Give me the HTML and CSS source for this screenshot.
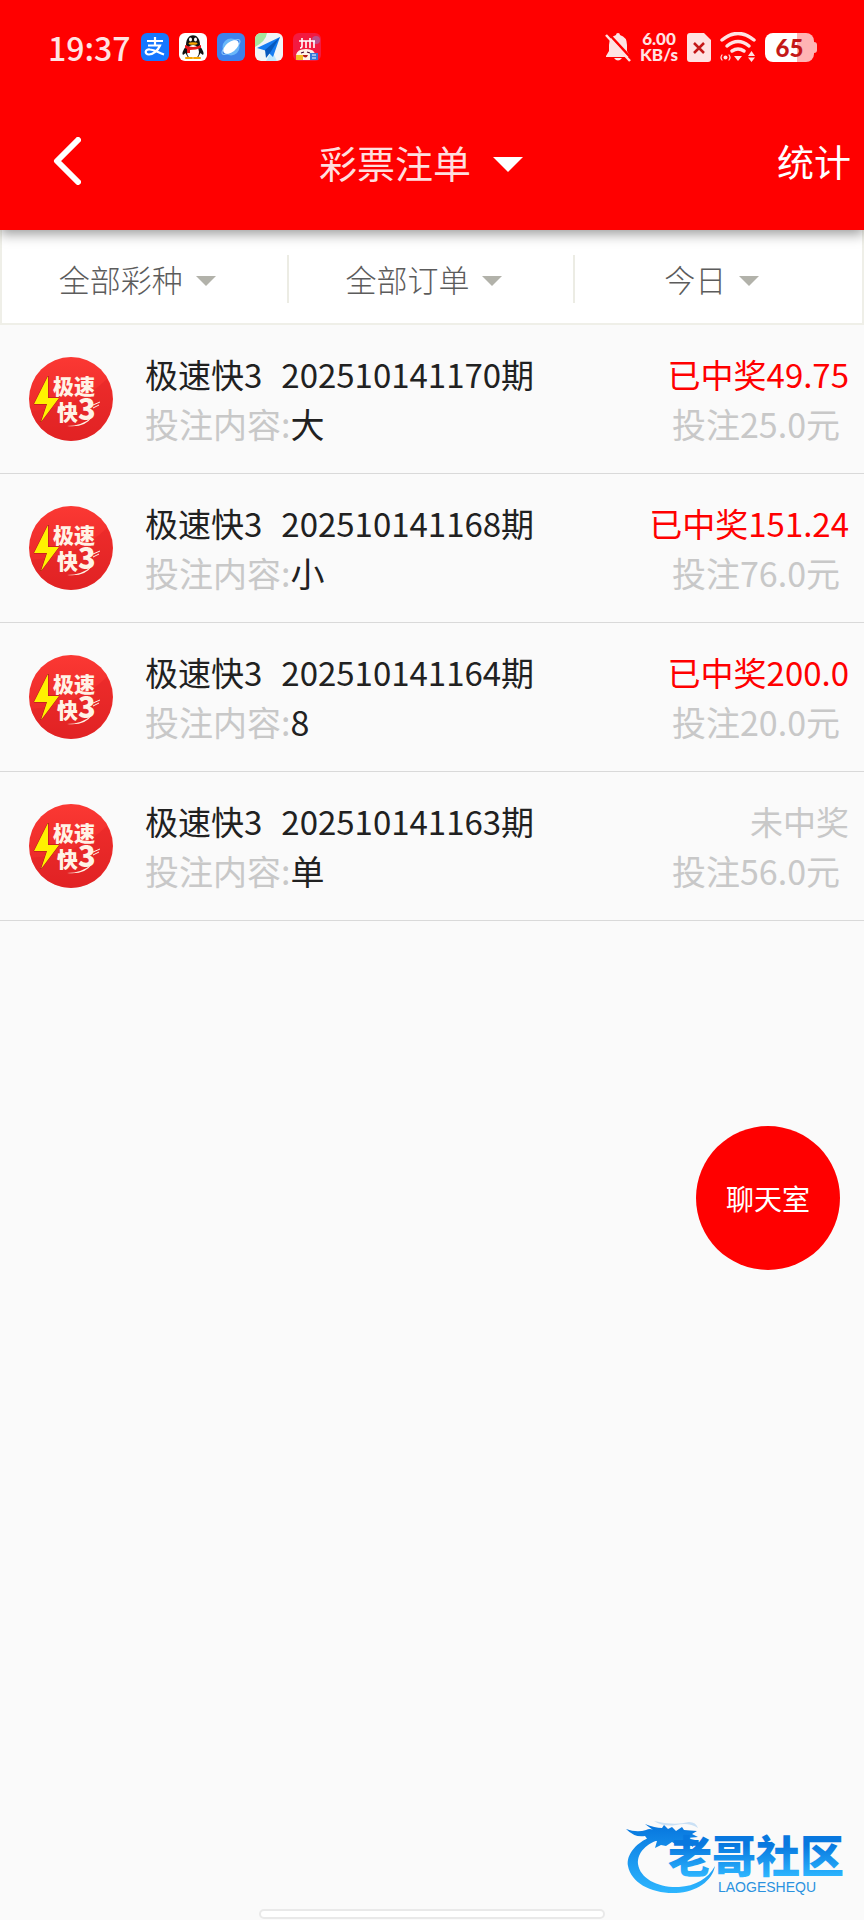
FILE: index.html
```html
<!DOCTYPE html>
<html lang="zh-CN">
<head>
  <meta charset="UTF-8">
  <meta name="viewport" content="width=device-width, initial-scale=1.0">
  <title>彩票注单</title>
  <link rel="stylesheet" href="styles.css">
</head>
<body>
  <header class="top">
    <!-- 状态栏 -->
    <div class="status-bar">
      <div class="status-left">
        <span class="clock">19:37</span>
        <svg class="app-icon" viewBox="0 0 28 28">
          <rect width="28" height="28" rx="6" fill="#1677ff"/>
          <path d="M6 8h16M14 4v8M7 12.500h12c-2 5-7 9-11 9-5 0-4-6 1-5 5 .5 8 3 14 5" fill="none" stroke="#fff" stroke-width="2.200"/>
        </svg>
        <svg class="app-icon" viewBox="0 0 28 28">
          <rect width="28" height="28" rx="6" fill="#fff"/>
          <path d="M7 13q-5 7-3 9l4-3zM21 13q5 7 3 9l-4-3z" fill="#111"/>
          <ellipse cx="14" cy="17" rx="8" ry="9" fill="#111"/>
          <ellipse cx="14" cy="19" rx="6" ry="7" fill="#fff"/>
          <path d="M7 12C7-1 21-1 21 12z" fill="#111"/>
          <ellipse cx="11.500" cy="6.500" rx="1.500" ry="2" fill="#fff"/>
          <ellipse cx="16.500" cy="6.500" rx="1.500" ry="2" fill="#fff"/>
          <ellipse cx="14" cy="10.500" rx="4.500" ry="1.300" fill="#f7a400"/>
          <path d="M6 12q8 4 16 0v3q-5 2-11 2v3H8v-4l-2-1z" fill="#e8161b"/>
          <path d="M7 25h6M15 25h6" stroke="#f7a400" stroke-width="2" stroke-linecap="round"/>
        </svg>
        <svg class="app-icon" viewBox="0 0 28 28">
          <rect width="28" height="28" rx="6" fill="#3d83ea"/>
          <circle cx="14" cy="14" r="8.500" fill="#68b7fa"/>
          <ellipse cx="14" cy="14" rx="11" ry="4" fill="none" stroke="#8bc9fb" transform="rotate(-38 14 14)"/>
          <ellipse cx="14" cy="14" rx="9" ry="5" fill="#fff" transform="rotate(-38 14 14)"/>
        </svg>
        <svg class="app-icon" viewBox="0 0 28 28">
          <rect width="28" height="28" rx="6" fill="#f1f5f7"/>
          <path d="M0 14V6a6 6 0 0 1 6-6h6q-1 8-12 14z" fill="#a5e79f"/>
          <path d="M11 28l6-10 5 10z" fill="#bde7ff"/>
          <path d="M2 15L25 4l-7 20-6-6z" fill="#167df2"/>
          <path d="M25 4L10 17l1 8 4-5z" fill="#0759bd"/>
        </svg>
        <svg class="app-icon" viewBox="0 0 28 28">
          <rect width="28" height="28" rx="6" fill="#f31a40"/>
          <circle cx="23" cy="7" r="4" fill="#bc508b"/>
          <path d="M6 8h16M9 5v8q0 2-2 2M13 8v7M17 5v10M21 8v7" fill="none" stroke="#fff" stroke-width="1.600"/>
          <path d="M3 22q1-6 10-6 9 0 9 6l-5 5H7z" fill="#fff2e6"/>
          <path d="M8 20l3-1M14 19l3 1" stroke="#402" stroke-width="1.200"/>
          <path d="M9 22q4 5 6 0z" fill="#b51b16"/>
          <rect x="3" y="22" width="7" height="5" fill="#f4bd25"/>
          <rect x="17" y="20" width="8" height="7" fill="#3479d8"/>
          <path d="M19 22h4M19 25h4" stroke="#fff"/>
        </svg>
      </div>
      <div class="status-right">
        <svg class="bell" viewBox="0 0 26 30">
          <path d="M13 1q2 0 2 2 7 2 7 10v6l3 5v1H1v-1l3-5v-6q0-8 7-10 0-2 2-2z" fill="#ffe3e3"/>
          <path d="M9 26h8q-4 5-8 0z" fill="#ffe3e3"/>
          <path d="M3 1l24 26" stroke="#f00" stroke-width="2.500"/>
          <path d="M1 3l24 26" stroke="#ffe3e3" stroke-width="2.500"/>
        </svg>
        <div class="speed"><span>6.00</span><span>KB/s</span></div>
        <svg class="sim" viewBox="0 0 24 29">
          <path d="M3 0h14l7 7v19q0 3-3 3H3q-3 0-3-3V3q0-3 3-3z" fill="#ffe3e3"/>
          <path d="M7 10l10 10M17 10L7 20" stroke="#c41818" stroke-width="2.500"/>
        </svg>
        <svg class="wifi" viewBox="0 0 36 30">
          <g fill="none" stroke="#ffe3e3" stroke-linecap="round">
            <path d="M2 8Q18-5 34 8" stroke-width="3.500"/>
            <path d="M7 14q11-9 22 0" stroke-width="3.500"/>
            <path d="M12 19q6-4 12 0" stroke-width="3.500"/>
            <path d="M2 23q-2 2.500 0 5M9 23q2 2.500 0 5" stroke-width="1.200"/>
          </g>
          <circle cx="5.500" cy="25.500" r="2" fill="#ffe3e3"/>
          <path d="M14 24h8l-4 5zM28 24l3.500-5 3.500 5zM28 25.500h7L31.500 30z" fill="#ffe3e3"/>
        </svg>
        <div class="battery"><span>65</span></div>
      </div>
    </div>

    <!-- 标题栏 -->
    <nav class="title-bar">
      <button type="button" class="back" aria-label="返回">
        <svg viewBox="0 0 28 48"><path d="M25 3L4 24l21 21" fill="none" stroke="#fff" stroke-width="6" stroke-linecap="round" stroke-linejoin="round"/></svg>
      </button>
      <button type="button" class="title">彩票注单<i class="arrow-lg"></i></button>
      <a class="stats" href="#stats">统计</a>
    </nav>
  </header>

  <!-- 筛选 -->
  <div class="filters">
    <button type="button">全部彩种<i class="arrow"></i></button>
    <button type="button">全部订单<i class="arrow"></i></button>
    <button type="button">今日<i class="arrow"></i></button>
  </div>

  <!-- 注单列表 -->
  <ul class="orders">
    <li class="order">
      <svg class="ball" viewBox="0 0 84 84">
        <defs>
          <linearGradient id="ballFill" x1="0" y1="0" x2="0" y2="1">
            <stop offset="0" stop-color="#fb3833"/>
            <stop offset="1" stop-color="#e42425"/>
          </linearGradient>
        </defs>
        <circle cx="42" cy="42" r="42" fill="url(#ballFill)"/>
        <path d="M2 54Q48 51 78 22A42 42 0 0 1 42 84 42 42 0 0 1 2 54z" fill="#dd2022" opacity=".35"/>
        <path d="M19 19L5 47h13l-6 18 18-24H19z" fill="#fff200" stroke="#a81614" paint-order="stroke"/>
        <text class="ball-text" x="24" y="37">极速</text>
        <text class="ball-text" x="28" y="63">快<tspan class="ball-num">3</tspan></text>
        <path d="M38 69q15 0 25-9-7 11-25 9z" fill="#fff3e6"/>
        <path d="M64 48l7-3M64 51l6-3" stroke="#fff3e6"/>
      </svg>
      <div class="info">
        <p class="name"><span>极速快3</span><span>202510141170期</span></p>
        <p class="muted">投注内容:<b>大</b></p>
      </div>
      <div class="result">
        <p class="win">已中奖49.75</p>
        <p class="muted stake">投注25.0元</p>
      </div>
    </li>
    <li class="order">
      <svg class="ball" viewBox="0 0 84 84">
        <circle cx="42" cy="42" r="42" fill="url(#ballFill)"/>
        <path d="M2 54Q48 51 78 22A42 42 0 0 1 42 84 42 42 0 0 1 2 54z" fill="#dd2022" opacity=".35"/>
        <path d="M19 19L5 47h13l-6 18 18-24H19z" fill="#fff200" stroke="#a81614" paint-order="stroke"/>
        <text class="ball-text" x="24" y="37">极速</text>
        <text class="ball-text" x="28" y="63">快<tspan class="ball-num">3</tspan></text>
        <path d="M38 69q15 0 25-9-7 11-25 9z" fill="#fff3e6"/>
        <path d="M64 48l7-3M64 51l6-3" stroke="#fff3e6"/>
      </svg>
      <div class="info">
        <p class="name"><span>极速快3</span><span>202510141168期</span></p>
        <p class="muted">投注内容:<b>小</b></p>
      </div>
      <div class="result">
        <p class="win">已中奖151.24</p>
        <p class="muted stake">投注76.0元</p>
      </div>
    </li>
    <li class="order">
      <svg class="ball" viewBox="0 0 84 84">
        <circle cx="42" cy="42" r="42" fill="url(#ballFill)"/>
        <path d="M2 54Q48 51 78 22A42 42 0 0 1 42 84 42 42 0 0 1 2 54z" fill="#dd2022" opacity=".35"/>
        <path d="M19 19L5 47h13l-6 18 18-24H19z" fill="#fff200" stroke="#a81614" paint-order="stroke"/>
        <text class="ball-text" x="24" y="37">极速</text>
        <text class="ball-text" x="28" y="63">快<tspan class="ball-num">3</tspan></text>
        <path d="M38 69q15 0 25-9-7 11-25 9z" fill="#fff3e6"/>
        <path d="M64 48l7-3M64 51l6-3" stroke="#fff3e6"/>
      </svg>
      <div class="info">
        <p class="name"><span>极速快3</span><span>202510141164期</span></p>
        <p class="muted">投注内容:<b>8</b></p>
      </div>
      <div class="result">
        <p class="win">已中奖200.0</p>
        <p class="muted stake">投注20.0元</p>
      </div>
    </li>
    <li class="order">
      <svg class="ball" viewBox="0 0 84 84">
        <circle cx="42" cy="42" r="42" fill="url(#ballFill)"/>
        <path d="M2 54Q48 51 78 22A42 42 0 0 1 42 84 42 42 0 0 1 2 54z" fill="#dd2022" opacity=".35"/>
        <path d="M19 19L5 47h13l-6 18 18-24H19z" fill="#fff200" stroke="#a81614" paint-order="stroke"/>
        <text class="ball-text" x="24" y="37">极速</text>
        <text class="ball-text" x="28" y="63">快<tspan class="ball-num">3</tspan></text>
        <path d="M38 69q15 0 25-9-7 11-25 9z" fill="#fff3e6"/>
        <path d="M64 48l7-3M64 51l6-3" stroke="#fff3e6"/>
      </svg>
      <div class="info">
        <p class="name"><span>极速快3</span><span>202510141163期</span></p>
        <p class="muted">投注内容:<b>单</b></p>
      </div>
      <div class="result">
        <p class="muted">未中奖</p>
        <p class="muted stake">投注56.0元</p>
      </div>
    </li>
  </ul>

  <button type="button" class="chat-btn">聊天室</button>

  <footer class="bottom">
    <svg class="brand" viewBox="0 0 224 80">
      <defs>
        <linearGradient id="blue" gradientUnits="userSpaceOnUse" x1="0" y1="8" x2="0" y2="74">
          <stop offset="0" stop-color="#0878df"/>
          <stop offset="1" stop-color="#2db6ff"/>
        </linearGradient>
        <linearGradient id="blueText" gradientUnits="userSpaceOnUse" x1="0" y1="26" x2="0" y2="58">
          <stop offset="0" stop-color="#0878df"/>
          <stop offset="1" stop-color="#2db6ff"/>
        </linearGradient>
      </defs>
      <g fill="url(#blue)">
        <path d="M30 16C10 22 0 36 2 47c3 17 24 28 48 27 21-1 36-12 39-27-7 13-20 20-36 21C33 69 14 60 12 45 11 34 20 24 36 20z"/>
        <path d="M0 10q11 4 20 1 4-2 7 0l-8-6q10 4 17 4l2-3 4 4 4-2 4 4 6-4 2 3 13 1-5 3 6 3-11 1 8 2-2 7-6-4-10 2-5-3-6 4-5-1-6 3 2-7-9-1-3-4q-10 2-19-7z"/>
        <path d="M28 2q20 5 35 1 7 0 9 6-9-6-22-3Q37 8 28 2z" opacity=".2"/>
      </g>
      <text class="brand-text" x="42" y="54" fill="url(#blueText)">老哥社区</text>
      <text class="brand-latin" x="92" y="73">LAOGESHEQU</text>
    </svg>
    <div class="home-bar"></div>
  </footer>
</body>
</html>
```
FILE: styles.css
```css
* {
    box-sizing: border-box;
}

body {
    margin: 0;
    min-height: 100vh;
    display: flex;
    flex-direction: column;
    background-color: #fafafa;
    color: #212121;
    font-family: "Noto Sans CJK SC", "Noto Sans", sans-serif;
    font-size: 33px;
}

button {
    border: none;
    background: none;
    padding: 0;
    font-family: inherit;
    cursor: pointer;
}

p, ul {
    margin: 0;
    padding: 0;
}

.top {
    position: relative;
    background-color: #ff0000;
    color: #fff;
    box-shadow: 0 4px 12px rgba(0, 0, 0, 0.4);
}

/* 状态栏 */
.status-bar {
    display: flex;
    align-items: center;
    justify-content: space-between;
    height: 94px;
    padding: 0 50px 0 48px;
}

.status-left {
    display: flex;
    align-items: center;
    gap: 10px;
}

.clock {
    font-size: 32px;
    font-weight: 500;
    line-height: 40px;
    color: #ffe3e3;
}

.app-icon {
    width: 28px;
    height: 28px;
}

.status-right {
    display: flex;
    align-items: center;
    gap: 9px;
}

.bell {
    width: 26px;
    height: 30px;
}

.speed {
    display: flex;
    flex-direction: column;
    align-items: center;
    font-family: Lato, sans-serif;
    font-size: 17px;
    font-weight: 900;
    line-height: 16px;
    color: #ffe3e3;
}

.sim {
    width: 24px;
    height: 29px;
}

.wifi {
    width: 36px;
    height: 30px;
}

.battery {
    position: relative;
    width: 49px;
    height: 29px;
    border-radius: 8px;
    background: linear-gradient(to right, #fff 65%, #ffb4b4 65%);
    color: #c41818;
    font-family: Lato, sans-serif;
    font-size: 24px;
    font-weight: 900;
    line-height: 29px;
    text-align: center;
}

.battery::after {
    content: "";
    position: absolute;
    right: -3px;
    top: 9px;
    width: 3px;
    height: 11px;
    border-radius: 0 3px 3px 0;
    background-color: #ffb4b4;
}

/* 标题栏 */
.title-bar {
    display: grid;
    grid-template-columns: 1fr auto 1fr;
    align-items: center;
    height: 136px;
    padding: 0 13px 2px 53px;
}

.back {
    justify-self: start;
    width: 28px;
    height: 48px;
}

.back svg {
    display: block;
    width: 28px;
    height: 48px;
}

.title {
    display: flex;
    align-items: center;
    gap: 22px;
    margin-right: 62px;
    color: #ffdede;
    font-size: 38px;
}

.arrow-lg {
    margin-top: 6px;
    border-left: 15px solid transparent;
    border-right: 15px solid transparent;
    border-top: 15px solid #fff;
}

.stats {
    justify-self: end;
    color: #fff;
    font-size: 37px;
    text-decoration: none;
}

/* 筛选 */
.filters {
    display: grid;
    grid-template-columns: repeat(3, 1fr);
    align-items: center;
    height: 95px;
    padding-top: 4px;
    background-color: #fff;
    border: 2px solid #efefe8;
    border-top: none;
}

.filters button {
    display: flex;
    align-items: center;
    justify-content: center;
    gap: 13px;
    height: 48px;
    padding-right: 14px;
    border-right: 2px solid #ecece4;
    color: #5c5c5c;
    font-size: 31px;
    font-weight: 300;
}

.filters button:last-child {
    border-right: none;
}

.arrow {
    margin-top: 4px;
    border-left: 10px solid transparent;
    border-right: 10px solid transparent;
    border-top: 10px solid #b2b2aa;
}

/* 注单列表 */
.orders {
    list-style: none;
}

.order {
    display: flex;
    align-items: center;
    height: 149px;
    padding: 0 15px 0 29px;
    border-bottom: 1px solid #d9d9d9;
    line-height: 50px;
}

.ball {
    width: 84px;
    height: 84px;
    margin-right: 32px;
}

.ball-text {
    font-size: 21px;
    font-weight: 900;
    fill: #fff3e6;
}

.ball-num {
    font-size: 29px;
}

.info {
    flex: 1;
}

.name {
    display: flex;
    gap: 19px;
}

.result {
    text-align: right;
}

.win {
    color: #ff0000;
}

.muted {
    color: #c8c8c8;
}

.muted b {
    color: #212121;
    font-weight: 400;
}

.stake {
    padding-right: 9px;
}

.info .muted,
.stake {
    font-size: 34px;
}

/* 聊天室悬浮按钮 */
.chat-btn {
    position: fixed;
    right: 24px;
    bottom: 650px;
    width: 144px;
    height: 144px;
    border-radius: 50%;
    background-color: #ff0000;
    color: #fff;
    font-size: 28px;
}

/* 底部 */
.bottom {
    margin-top: auto;
    display: flex;
    flex-direction: column;
    gap: 10px;
}

.brand {
    align-self: flex-end;
    width: 224px;
    height: 80px;
    margin-right: 14px;
}

.brand-text {
    font-size: 44px;
    font-weight: 900;
}

.brand-latin {
    font-family: "Liberation Sans", sans-serif;
    font-size: 14px;
    fill: #2a92df;
}

.home-bar {
    align-self: center;
    width: 40%;
    height: 10px;
    margin-bottom: 1px;
    border: 2px solid #e9e9e9;
    border-radius: 5px;
    background-color: #fff;
}
```
